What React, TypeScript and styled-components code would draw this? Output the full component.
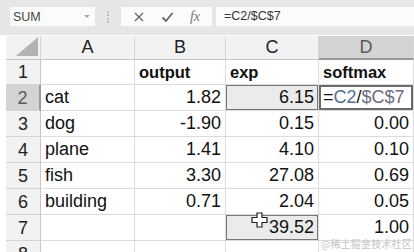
import React from 'react';
import styled, { createGlobalStyle } from 'styled-components';

const Global = createGlobalStyle`
  html, body { margin: 0; padding: 0; background: #ffffff; }
  body { width: 414px; height: 252px; overflow: hidden; font-family: "Liberation Sans", Arial, sans-serif; }
`;

const COLS = ['A', 'B', 'C', 'D'];

type Row = { n: number; a?: string; b?: string; c?: string; d?: string; head?: boolean };

const rows: Row[] = [
  { n: 1, b: 'output', c: 'exp', d: 'softmax', head: true },
  { n: 2, a: 'cat', b: '1.82', c: '6.15' },
  { n: 3, a: 'dog', b: '-1.90', c: '0.15', d: '0.00' },
  { n: 4, a: 'plane', b: '1.41', c: '4.10', d: '0.10' },
  { n: 5, a: 'fish', b: '3.30', c: '27.08', d: '0.69' },
  { n: 6, a: 'building', b: '0.71', c: '2.04', d: '0.05' },
  { n: 7, c: '39.52', d: '1.00' },
  { n: 8 },
];

const Page = styled.div`
  position: relative;
  width: 414px;
  height: 252px;
  overflow: hidden;
`;

const FormulaBar = styled.div`
  display: flex;
  align-items: center;
  height: 35px;
  background: #e6e6e6;
  padding: 0 0 2px 10px;
  box-sizing: border-box;
`;

const NameBox = styled.div`
  display: flex;
  align-items: center;
  justify-content: space-between;
  width: 85px;
  height: 19px;
  background: #fbfbfb;
  padding: 0 5px 0 3px;
  box-sizing: border-box;
  font-size: 12.5px;
  color: #444;
`;

const Caret = styled.span`
  width: 0;
  height: 0;
  border-left: 3px solid transparent;
  border-right: 3px solid transparent;
  border-top: 3px solid #aaa;
`;

const Grip = styled.div`
  width: 0;
  height: 12px;
  margin: 0 12px 0 12px;
  border-left: 2px dotted #bdbdbd;
`;

const ToolBox = styled.div`
  display: flex;
  align-items: center;
  justify-content: space-around;
  width: 91px;
  height: 19px;
  background: #fbfbfb;
  padding: 0 4px;
  box-sizing: border-box;
`;

const Fx = styled.span`
  font-family: "Liberation Serif", serif;
  font-style: italic;
  font-size: 14px;
  color: #777;
`;

const FormulaInput = styled.div`
  flex: 1;
  height: 19px;
  margin-left: 4px;
  background: #fbfbfb;
  padding-left: 8px;
  font-size: 12.5px;
  line-height: 19px;
  color: #333;
`;

const Sheet = styled.div`
  display: grid;
  grid-template-columns: 35px 94px 91px 93px 95px;
  grid-template-rows: 24px 25px repeat(7, 26px);
  margin: 1px 0 0 6px;
`;

const Corner = styled.div`
  background: #f2f2f2;
  border-right: 1px solid #d6d6d6;
  border-bottom: 1px solid #c6c6c6;
  display: flex;
  align-items: flex-end;
  justify-content: flex-end;
  padding: 0 2px 3px 0;
  box-sizing: border-box;
`;

const Triangle = styled.div`
  width: 0;
  height: 0;
  border-left: 22px solid transparent;
  border-bottom: 19px solid #b3b3b3;
`;

const ColHead = styled.div<{ $on?: boolean }>`
  display: flex;
  align-items: center;
  justify-content: center;
  background: ${p => (p.$on ? '#d3d3d3' : '#f2f2f2')};
  color: ${p => (p.$on ? '#5a5a5a' : '#222')};
  border-right: 1px solid #d6d6d6;
  border-bottom: ${p => (p.$on ? '2px solid #9a9a9a' : '1px solid #c6c6c6')};
  font-size: 18px;
  box-sizing: border-box;
`;

const RowHead = styled.div<{ $on?: boolean }>`
  display: flex;
  align-items: flex-end;
  justify-content: center;
  padding-bottom: 3px;
  background: ${p => (p.$on ? '#d3d3d3' : '#f2f2f2')};
  color: ${p => (p.$on ? '#5a5a5a' : '#222')};
  border-right: ${p => (p.$on ? '2px solid #9a9a9a' : '1px solid #c6c6c6')};
  border-bottom: 1px solid #d6d6d6;
  font-size: 18px;
  line-height: 1;
  box-sizing: border-box;
`;

const Cell = styled.div<{ $num?: boolean; $bold?: boolean; $marked?: boolean; $active?: boolean }>`
  position: relative;
  display: flex;
  align-items: flex-end;
  justify-content: ${p => (p.$num ? 'flex-end' : 'flex-start')};
  padding: 0 4px 4px 4px;
  border-right: 1px solid #dcdcdc;
  border-bottom: 1px solid #dcdcdc;
  background: ${p => (p.$marked ? '#ebebeb' : '#fff')};
  box-shadow: ${p =>
    p.$marked ? 'inset 0 0 0 1px #767676' : p.$active ? 'inset 0 0 0 2px #6a6a6a' : 'none'};
  font-size: ${p => (p.$bold ? '16.5px' : '18px')};
  font-weight: ${p => (p.$bold ? 700 : 400)};
  line-height: 1;
  color: #111;
  box-sizing: border-box;
  white-space: nowrap;
`;

const Ref = styled.span<{ $tone: string }>`
  color: ${p => p.$tone};
`;

const Cursor = styled.svg`
  position: absolute;
  left: 25px;
  top: -3px;
`;

const Watermark = styled.div`
  position: absolute;
  right: 2px;
  bottom: 1px;
  font-family: "Noto Sans CJK SC", sans-serif;
  font-size: 10px;
  color: #c4c4c4;
  letter-spacing: 0.2px;
`;

const Formula = () => (
  <>
    =<Ref $tone="#55708e">C2</Ref>/<Ref $tone="#6b6b7e">$C$7</Ref>
  </>
);

const App = () => {
  return (
    <Page>
      <Global />
      <FormulaBar>
        <NameBox>
          SUM
          <Caret />
        </NameBox>
        <Grip />
        <ToolBox>
          <svg width="12" height="12" viewBox="0 0 12 12">
            <path d="M2 2 L10 10 M10 2 L2 10" stroke="#666" strokeWidth="1.3" fill="none" />
          </svg>
          <svg width="13" height="12" viewBox="0 0 13 12">
            <path d="M1.5 6.5 L5 10 L11.5 2" stroke="#666" strokeWidth="1.8" fill="none" />
          </svg>
          <Fx>fx</Fx>
        </ToolBox>
        <FormulaInput>=C2/$C$7</FormulaInput>
      </FormulaBar>
      <Sheet>
        <Corner>
          <Triangle />
        </Corner>
        {COLS.map(c => (
          <ColHead key={c} $on={c === 'D'}>
            {c}
          </ColHead>
        ))}
        {rows.map(r => (
          <React.Fragment key={r.n}>
            <RowHead $on={r.n === 2}>{r.n}</RowHead>
            <Cell $bold={r.head}>{r.a}</Cell>
            <Cell $bold={r.head} $num={!r.head}>
              {r.b}
            </Cell>
            <Cell $bold={r.head} $num={!r.head} $marked={r.n === 2 || r.n === 7}>
              {r.n === 7 && (
                <Cursor width="18" height="16" viewBox="0 0 18 16">
                  <path
                    d="M6 1 H11 V5.5 H16 V10.5 H11 V15 H6 V10.5 H1 V5.5 H6 Z"
                    fill="#fff"
                    stroke="#222"
                    strokeWidth="1.2"
                  />
                </Cursor>
              )}
              {r.c}
            </Cell>
            <Cell $bold={r.head} $num={!r.head && r.n !== 2} $active={r.n === 2}>
              {r.n === 2 ? <Formula /> : r.d}
            </Cell>
          </React.Fragment>
        ))}
      </Sheet>
      <Watermark>@稀土掘金技术社区</Watermark>
    </Page>
  );
};

export default App;
